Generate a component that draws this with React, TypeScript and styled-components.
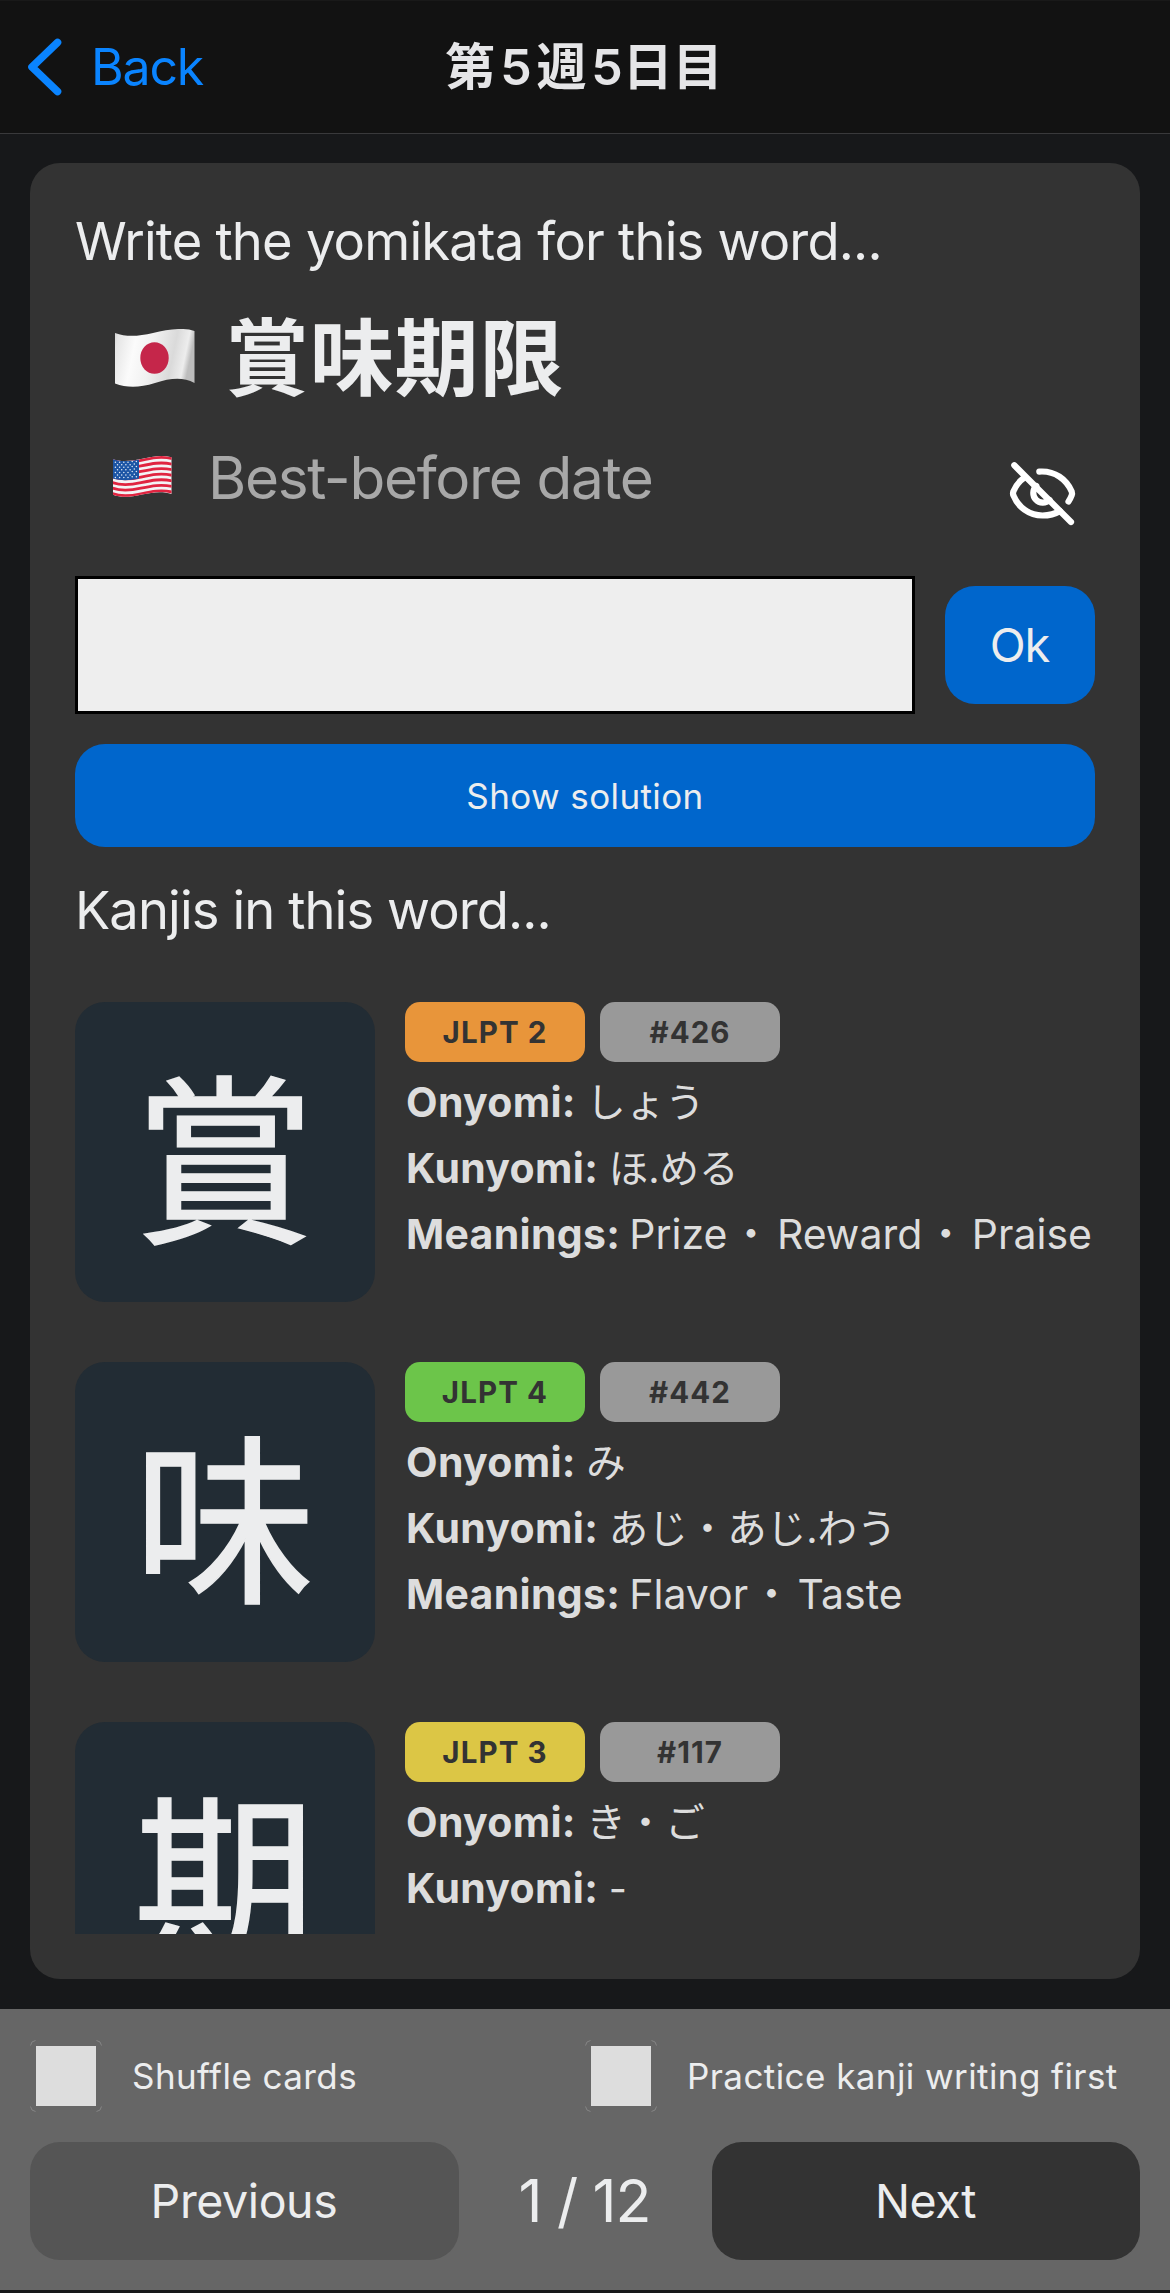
import React from 'react';
import styled, { createGlobalStyle } from 'styled-components';

const GlobalStyle = createGlobalStyle`
  * { box-sizing: border-box; }
  html, body { margin: 0; padding: 0; background: #17181a; }
  body {
    font-family: Inter, 'Noto Sans CJK JP', sans-serif;
    color: #ecedee;
  }
  button { font-family: inherit; color: inherit; border: 0; margin: 0; padding: 0; }
`;

const Screen = styled.div`
  width: 1170px;
  height: 2293px;
  display: flex;
  flex-direction: column;
  overflow: hidden;
  background: #17181a;
`;

const Header = styled.header`
  flex: none;
  height: 134px;
  display: grid;
  grid-template-columns: 1fr auto 1fr;
  align-items: center;
  background: #121212;
  border-top: 1px solid #191919;
  border-bottom: 1px solid #39393b;
`;

const BackButton = styled.button`
  display: flex;
  align-items: center;
  justify-self: start;
  gap: 23px;
  padding-left: 26px;
  background: none;
  color: #0a84ff;
  font-size: 50px;
  line-height: 66px;
  letter-spacing: -1.2px;
`;

const Title = styled.h1`
  margin: 0 2px 0 0;
  font-size: 50px;
  font-weight: 600;
  line-height: 66px;
  word-spacing: -7.8px;
  color: #e5e5e7;
  white-space: nowrap;
`;

const Main = styled.main`
  flex: 1;
  min-height: 0;
  display: flex;
  padding: 29px 30px 30px;
`;

const Card = styled.section`
  flex: 1;
  min-width: 0;
  min-height: 0;
  display: flex;
  flex-direction: column;
  padding: 45px;
  border-radius: 30px;
  background: #333333;
`;

const Prompt = styled.h2<{ $top?: number }>`
  flex: none;
  margin: ${p => p.$top ?? 0}px 0 0;
  font-size: 52.5px;
  font-weight: 400;
  line-height: 66px;
  letter-spacing: ${p => (p.$top ? -0.9 : -0.8)}px;
`;

const WordRow = styled.div`
  flex: none;
  display: flex;
  align-items: center;
  gap: 30px;
  height: 120px;
  margin-top: 24px;
  padding-left: 40px;
`;

const Word = styled.span`
  font-size: 84px;
  font-weight: 700;
  line-height: 121px;
  letter-spacing: 0.8px;
`;

const TranslationRow = styled(WordRow)`
  gap: 36px;
  margin-top: 0;
  padding-left: 38px;
`;

const Translation = styled.span`
  font-size: 58.5px;
  line-height: 120px;
  letter-spacing: -1.35px;
  color: #a8a8a8;
`;

const EyeButton = styled.button`
  align-self: flex-start;
  width: 90px;
  height: 90px;
  margin: 32px 5px 0 auto;
  background: none;
  line-height: 0;
`;

const AnswerRow = styled.form`
  flex: none;
  display: flex;
  align-items: center;
  gap: 30px;
  margin: 38px 0 0;
`;

const AnswerInput = styled.input`
  flex: 1;
  min-width: 0;
  height: 138px;
  padding: 0 24px;
  border: 3px solid #000;
  border-radius: 0;
  background: #eeeeee;
  color: #222;
  font: 54px Inter, 'Noto Sans CJK JP', sans-serif;
  outline: none;
`;

const OkButton = styled.button`
  width: 150px;
  height: 118px;
  padding: 0 1px 2px 0;
  border-radius: 30px;
  background: #0066cc;
  font-size: 47px;
  letter-spacing: -1px;
`;

const SolutionButton = styled.button`
  flex: none;
  height: 103px;
  margin-top: 30px;
  border-radius: 30px;
  background: #0066cc;
  font-size: 35px;
  letter-spacing: 0.4px;
`;

const KanjiList = styled.div`
  flex: 1;
  min-height: 0;
  display: flex;
  flex-direction: column;
  gap: 60px;
  padding-top: 59px;
  overflow: hidden;
`;

const KanjiRow = styled.article`
  flex: none;
  display: flex;
  gap: 30px;
  height: 300px;
`;

const KanjiTile = styled.div`
  flex: none;
  width: 300px;
  height: 300px;
  padding: 21px 1px 0 0;
  border-radius: 30px;
  background: #222c34;
  font-size: 182px;
  font-weight: 400;
  line-height: 280px;
  text-align: center;
  -webkit-text-stroke: 1.5px #ecedee;
`;

const Details = styled.div`
  color: #dddddd;
`;

const Badges = styled.div`
  display: flex;
  gap: 15px;
  margin-bottom: 7px;
`;

const Badge = styled.span<{ $color: string }>`
  width: 180px;
  height: 60px;
  border-radius: 15px;
  background: ${p => p.$color};
  color: #333333;
  font-size: 29.5px;
  font-weight: 700;
  line-height: 61px;
  letter-spacing: 1.1px;
  text-align: center;
`;

const Reading = styled.p<{ $wordSpacing?: number }>`
  height: 66px;
  margin: 0;
  padding-left: 1px;
  font-size: 41px;
  line-height: 66px;
  word-spacing: ${p => p.$wordSpacing ?? -1}px;
  white-space: nowrap;

  b {
    font-weight: 700;
    letter-spacing: 0.3px;
  }
`;

const Kana = styled.span`
  font-size: 39.5px;
  line-height: 0;
`;

const Dot = styled.span`
  padding: 0 5.5px 0 3px;
`;

const Footer = styled.footer`
  flex: none;
  height: 281px;
  margin-bottom: 3px;
  padding: 31px 30px 30px;
  background: #666666;
`;

const Options = styled.div`
  display: grid;
  grid-template-columns: 555px 555px;
`;

const Option = styled.label`
  display: flex;
  align-items: center;
  gap: 30px;
  font-size: 35px;
  line-height: 72px;
  letter-spacing: 0.42px;
  white-space: nowrap;
`;

const Pager = styled.div`
  display: flex;
  align-items: center;
  justify-content: space-between;
  margin-top: 30px;
`;

const PageButton = styled.button<{ $muted?: boolean }>`
  width: ${p => (p.$muted ? 429 : 428)}px;
  height: 118px;
  padding-right: 1px;
  border-radius: 30px;
  background: ${p => (p.$muted ? '#555555' : '#333333')};
  font-size: 46.5px;
  letter-spacing: -0.4px;
`;

const PageCount = styled.span`
  padding-right: 2px;
  font-size: 59px;
  line-height: 118px;
  letter-spacing: -1.1px;
`;

const Chevron = () => (
  <svg width="42" height="66" viewBox="0 0 42 66" fill="none">
    <path d="M31.5 8.5 6 33l25.500 24.500" stroke="#0a84ff" strokeWidth="7.600" strokeLinecap="round" strokeLinejoin="round" />
  </svg>
);

const JapanFlag = () => (
  <svg width="80" height="58" viewBox="0 0 80 58">
    <defs>
      <linearGradient id="jp" x1="0" x2="1" y1="0" y2="0.15">
        <stop offset="0" stopColor="#d2d2d2" />
        <stop offset="0.06" stopColor="#e6e6e6" />
        <stop offset="0.28" stopColor="#fbfbfb" />
        <stop offset="0.5" stopColor="#f1f1f1" />
        <stop offset="0.78" stopColor="#dadada" />
        <stop offset="0.93" stopColor="#ededed" />
        <stop offset="1" stopColor="#bdbdbd" />
      </linearGradient>
    </defs>
    <path d="M0 4C11 8 23 7.500 38 4S68-2 79.500 2V54C68 48 56 49 40 54S12 59 0 54.500Z" fill="url(#jp)" />
    <ellipse cx="39.500" cy="29" rx="14.200" ry="15.800" fill="#c5264a" />
  </svg>
);

const FlagSlot = styled.span`
  height: 44px;
  line-height: 0;
`;

const stripes = Array.from({ length: 13 }, (_, i) => i);
const starRows = Array.from({ length: 7 }, (_, i) => i);

const UsaFlag = () => (
  <svg width="59" height="42" viewBox="0 0 59 42">
    <defs>
      <clipPath id="us">
        <path d="M0 3.200C8 6 18 5 28 3S48-1.500 58.500 1.200V38C50 35 40 36 29 38.500S8 42 0 38.700Z" />
      </clipPath>
    </defs>
    <g clipPath="url(#us)">
      <rect width="59" height="42" fill="#f3f3f5" />
      {stripes.filter(i => i % 2 === 0).map(i => (
        <path
          key={i}
          d={`M-1 ${4 + i * 2.79}C8 ${7.500 + i * 2.79} 18 ${6.500 + i * 2.79} 28 ${4.300 + i * 2.79}S48 ${i * 2.79} 60 ${2.700 + i * 2.79}`}
          fill="none"
          stroke="#e02440"
          strokeWidth="2.800"
        />
      ))}
      <path d="M0 2.800C8 6 17 5.200 26 3.400V22.500C17 24.500 8 25 0 22.500Z" fill="#1c55a5" />
      {starRows.map(r =>
        Array.from({ length: 6 - (r % 2) }, (_, c) => (
          <circle
            key={`${r}-${c}`}
            cx={2.4 + c * 4.2 + (r % 2) * 2.1}
            cy={6.200 + r * 2.55 - (c > 3 ? 0.8 : 0)}
            r="0.750"
            fill="#e4ecf6"
          />
        )),
      )}
    </g>
  </svg>
);

const EyeOff = () => (
  <svg width="90" height="90" viewBox="0 0 90 90" fill="none" stroke="#fff" strokeWidth="6.200" strokeLinecap="round" strokeLinejoin="round">
    <path d="M14.300 15.300 71 72" />
    <path d="M39.300 21.600C55 20.500 66.500 29.500 71.700 41.500Q72.400 43.500 71.700 45.200Q70.500 48.500 68.500 51.400" />
    <path d="M24.500 27.500C19.500 31 15.500 36 13.300 41.700Q12.700 43.500 13.300 45.200C18 57 29 65.500 42.500 65.500C49 65.500 55 64 60 61" />
    <path d="M36.300 36A9.600 9.600 0 1 0 49.500 50" />
  </svg>
);

const CheckBox = () => (
  <svg width="72" height="72" viewBox="0 0 72 72" fill="none">
    <rect x="6" y="6" width="60" height="60" fill="#dddddd" />
    <path
      d="M.5 5.500Q1 1 5.500.5M66.500.5Q71 1 71.500 5.500M71.500 66.500Q71 71 66.500 71.500M5.500 71.500Q1 71 .5 66.500"
      stroke="#858585"
    />
  </svg>
);

const kanjis = [
  { char: '賞', level: 2, color: '#e8953a', no: 426, on: 'しょう', kun: 'ほ.める', meanings: ['Prize', 'Reward', 'Praise'] },
  { char: '味', level: 4, color: '#6cc54a', no: 442, on: 'み', kun: 'あじ・あじ.わう', meanings: ['Flavor', 'Taste'] },
  { char: '期', level: 3, color: '#dcc645', no: 117, on: 'き・ご', kun: '-', meanings: [] },
];

export default function App() {
  return (
    <>
      <GlobalStyle />
      <Screen>
        <Header>
          <BackButton>
            <Chevron />
            Back
          </BackButton>
          <Title>第 5 週 5日目</Title>
        </Header>
        <Main>
          <Card>
            <Prompt>Write the yomikata for this word...</Prompt>
            <WordRow>
              <JapanFlag />
              <Word lang="ja">賞味期限</Word>
            </WordRow>
            <TranslationRow>
              <FlagSlot>
                <UsaFlag />
              </FlagSlot>
              <Translation>Best-before date</Translation>
              <EyeButton type="button">
                <EyeOff />
              </EyeButton>
            </TranslationRow>
            <AnswerRow>
              <AnswerInput />
              <OkButton type="button">Ok</OkButton>
            </AnswerRow>
            <SolutionButton type="button">Show solution</SolutionButton>
            <Prompt $top={30}>Kanjis in this word...</Prompt>
            <KanjiList lang="ja">
              {kanjis.map(k => (
                <KanjiRow key={k.char}>
                  <KanjiTile>{k.char}</KanjiTile>
                  <Details>
                    <Badges>
                      <Badge $color={k.color}>JLPT {k.level}</Badge>
                      <Badge $color="#999999">#{k.no}</Badge>
                    </Badges>
                    <Reading>
                      <b>Onyomi:</b> <Kana>{k.on}</Kana>
                    </Reading>
                    <Reading>
                      <b>Kunyomi:</b> <Kana>{k.kun}</Kana>
                    </Reading>
                    {k.meanings.length > 0 && (
                      <Reading $wordSpacing={-2.5}>
                        <b>Meanings:</b>{' '}
                        {k.meanings.map((m, i) => (
                          <React.Fragment key={m}>
                            {i > 0 && <Dot>・</Dot>}
                            {m}
                          </React.Fragment>
                        ))}
                      </Reading>
                    )}
                  </Details>
                </KanjiRow>
              ))}
            </KanjiList>
          </Card>
        </Main>
        <Footer>
          <Options>
            <Option>
              <CheckBox />
              Shuffle cards
            </Option>
            <Option>
              <CheckBox />
              Practice kanji writing first
            </Option>
          </Options>
          <Pager>
            <PageButton type="button" $muted>Previous</PageButton>
            <PageCount>1 / 12</PageCount>
            <PageButton type="button">Next</PageButton>
          </Pager>
        </Footer>
      </Screen>
    </>
  );
}
